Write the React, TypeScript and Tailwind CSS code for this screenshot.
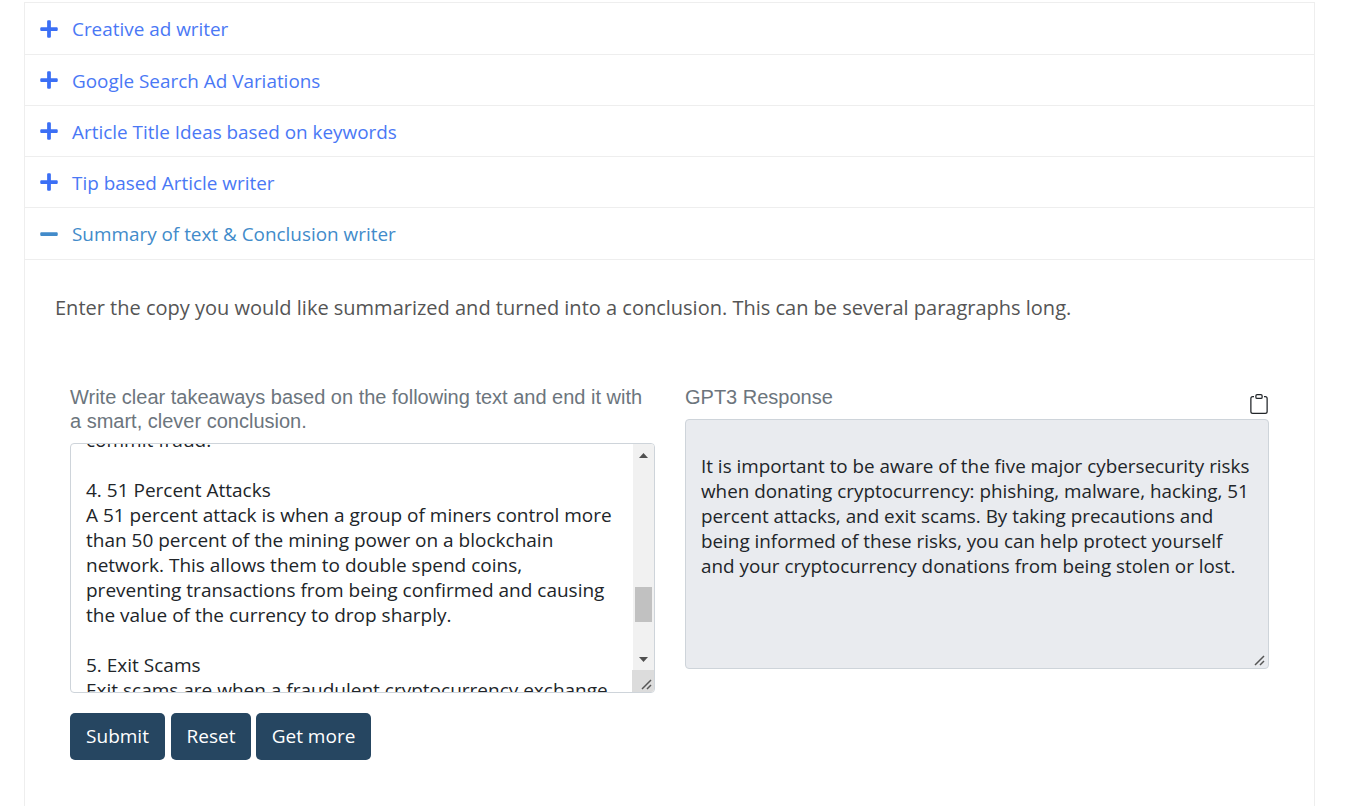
import { BsClipboard } from 'react-icons/bs';
import { FaMinus, FaPlus } from 'react-icons/fa';

const closedRows = [
  { label: 'Creative ad writer', rowClass: 'h-[52px]' },
  { label: 'Google Search Ad Variations', rowClass: 'h-[51px]' },
  { label: 'Article Title Ideas based on keywords', rowClass: 'h-[51px]' },
  { label: 'Tip based Article writer', rowClass: 'h-[51px]' },
];

const promptLines = [
  'commit fraud.',
  '\u00a0',
  '4. 51 Percent Attacks',
  'A 51 percent attack is when a group of miners control more',
  'than 50 percent of the mining power on a blockchain',
  'network. This allows them to double spend coins,',
  'preventing transactions from being confirmed and causing',
  'the value of the currency to drop sharply.',
  '\u00a0',
  '5. Exit Scams',
  'Exit scams are when a fraudulent cryptocurrency exchange',
];

const responseLines = [
  'It is important to be aware of the five major cybersecurity risks',
  'when donating cryptocurrency: phishing, malware, hacking, 51',
  'percent attacks, and exit scams. By taking precautions and',
  'being informed of these risks, you can help protect yourself',
  'and your cryptocurrency donations from being stolen or lost.',
];

function ResizeGrip() {
  return (
    <svg width="11" height="11" viewBox="0 0 11 11" className="text-[#555]">
      <path d="M1 10 L10 1 M6 10 L10 6" stroke="currentColor" strokeWidth="1.5" fill="none" />
    </svg>
  );
}

export default function App() {
  return (
    <div className="h-[806px] overflow-hidden bg-white pt-[2px] pl-6 font-['Open_Sans',sans-serif] text-[#212529]">
      <div className="w-[1291px] h-[810px] border border-[#eeeeee]">
        {/* Accordion rows */}
        {closedRows.map(row => (
          <div key={row.label} className={`${row.rowClass} flex items-center border-b border-[#eeeeee] pl-[14px]`}>
            <FaPlus className="w-[20px] h-[20px] text-[#3b6ff5]" />
            <span className="pt-[2px] ml-[13px] text-[18.9px] text-[#4a78f5]">{row.label}</span>
          </div>
        ))}
        <div className="h-[52px] flex items-center border-b border-[#eeeeee] pl-[14px]">
          <FaMinus className="w-[20px] h-[20px] text-[#428bca]" />
          <span className="pt-[2px] ml-[13px] text-[18.9px] text-[#428bca]">Summary of text &amp; Conclusion writer</span>
        </div>

        {/* Open panel */}
        <div className="pl-[30px]">
          <p className="mt-[34px] text-[20px] leading-[28px] whitespace-nowrap text-[#555555]">
            Enter the copy you would like summarized and turned into a conclusion. This can be several paragraphs long.
          </p>

          <div className="mt-[63px] ml-[15px] flex gap-[30px]">
            <div className="w-[585px]">
              <label className="block font-['Liberation_Sans',sans-serif] text-[20px] leading-[24px] text-[#6c757d] mb-[10px]">
                Write clear takeaways based on the following text and end it with a smart, clever conclusion.
              </label>
              <div className="relative h-[250px] overflow-hidden rounded-[4px] border border-[#ced4da] bg-white">
                <div className="-mt-[16px] pl-[15px] text-[19px] leading-[25px] whitespace-nowrap">
                  {promptLines.map((line, i) => (
                    <div key={i}>{line}</div>
                  ))}
                </div>
                {/* Scrollbar */}
                <div className="absolute top-0 bottom-0 right-0 w-[21px] bg-[#f1f1f1] flex flex-col">
                  <svg width="21" height="21" viewBox="0 0 21 21" className="shrink-0">
                    <path d="M6 14 L15 14 L10.5 9 Z" fill="#505050" />
                  </svg>
                  <div className="flex-1 relative">
                    <div className="absolute left-[2px] right-[2px] top-[122px] h-[35px] bg-[#c1c1c1]" />
                  </div>
                  <svg width="21" height="21" viewBox="0 0 21 21" className="shrink-0 mb-[22px]">
                    <path d="M6 8 L15 8 L10.5 13 Z" fill="#505050" />
                  </svg>
                </div>
                <div className="absolute bottom-0 right-0 w-[22px] h-[22px] bg-[#dcdcdc] flex items-end justify-end pr-[2px] pb-[2px]">
                  <ResizeGrip />
                </div>
              </div>
              <div className="mt-[20px] flex">
                <button className="h-[47px] w-[95px] rounded-[5px] bg-[#264661] text-white text-[19px]">Submit</button>
                <button className="h-[47px] w-[80px] ml-[6px] rounded-[5px] bg-[#264661] text-white text-[19px]">Reset</button>
                <button className="h-[47px] w-[115px] ml-[5px] rounded-[5px] bg-[#264661] text-white text-[19px]">Get more</button>
              </div>
            </div>

            <div className="w-[584px]">
              <div className="flex items-start justify-between h-[24px] mb-[10px]">
                <label className="font-['Liberation_Sans',sans-serif] text-[20px] leading-[24px] text-[#6c757d]">GPT3 Response</label>
                <BsClipboard className="w-[20px] h-[20px] mt-[9px] text-[#212529]" />
              </div>
              <div className="relative h-[250px] rounded-[4px] border border-[#ced4da] bg-[#e9ebef] pt-[34px] pl-[15px] text-[18.85px] leading-[25px] whitespace-nowrap">
                {responseLines.map(line => (
                  <div key={line}>{line}</div>
                ))}
                <div className="absolute bottom-[2px] right-[3px]">
                  <ResizeGrip />
                </div>
              </div>
            </div>
          </div>
        </div>
      </div>
    </div>
  );
}
